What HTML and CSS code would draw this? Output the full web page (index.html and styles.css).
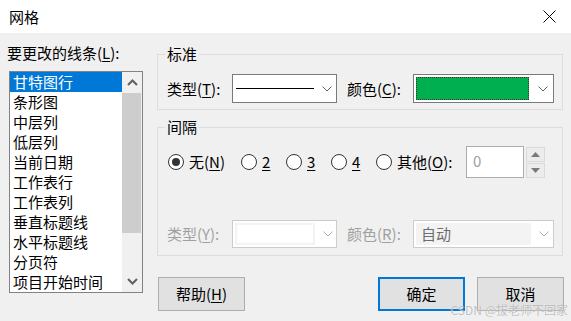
FILE: index.html
```html
<!DOCTYPE html>
<html lang="zh-CN">
<head>
<meta charset="utf-8">
<title>网格</title>
<link rel="stylesheet" href="styles.css">
</head>
<body>
<div class="titlebar">
  <span class="title">网格</span>
  <svg class="close" width="13" height="13" viewBox="0 0 13 13"><path d="M0.5 0.5 L12.5 12.5 M12.5 0.5 L0.5 12.5" stroke="#000" stroke-width="1" fill="none"/></svg>
</div>
<div class="main">
  <div class="left">
    <div class="left-label">要更改的线条(<u>L</u>):</div>
    <div class="listbox">
      <ul class="items">
        <li class="item sel">甘特图行</li>
        <li class="item">条形图</li>
        <li class="item">中层列</li>
        <li class="item">低层列</li>
        <li class="item">当前日期</li>
        <li class="item">工作表行</li>
        <li class="item">工作表列</li>
        <li class="item">垂直标题线</li>
        <li class="item">水平标题线</li>
        <li class="item">分页符</li>
        <li class="item">项目开始时间</li>
      </ul>
      <div class="scrollbar">
        <div class="sb-arrow"><svg width="11" height="7" viewBox="0 0 11 7"><path d="M1 6 L5.5 1.5 L10 6" stroke="#606060" stroke-width="2" fill="none"/></svg></div>
        <div class="sb-track"><div class="sb-thumb"></div></div>
        <div class="sb-arrow"><svg width="11" height="7" viewBox="0 0 11 7"><path d="M1 1 L5.5 5.5 L10 1" stroke="#606060" stroke-width="2" fill="none"/></svg></div>
      </div>
    </div>
  </div>
  <div class="right">
    <fieldset class="group g1">
      <legend>标准</legend>
      <div class="row row1">
        <span class="lbl lbl-a">类型(<u>T</u>):</span>
        <div class="combo combo-a">
          <div class="combo-body"><span class="line"></span></div>
          <span class="chev"><svg width="10" height="6" viewBox="0 0 10 6"><path d="M0.5 0.5 L5 5 L9.5 0.5" stroke="#606060" fill="none"/></svg></span>
        </div>
        <span class="lbl lbl-b">颜色(<u>C</u>):</span>
        <div class="combo combo-b">
          <div class="combo-body"><span class="swatch"></span></div>
          <span class="chev"><svg width="10" height="6" viewBox="0 0 10 6"><path d="M0.5 0.5 L5 5 L9.5 0.5" stroke="#606060" fill="none"/></svg></span>
        </div>
      </div>
    </fieldset>
    <fieldset class="group g2">
      <legend>间隔</legend>
      <div class="row row2">
        <label class="radio-item r-none"><span class="radio checked"></span><span class="rtext">无(<u>N</u>)</span></label>
        <label class="radio-item r-2"><span class="radio"></span><span class="rtext"><u>2</u></span></label>
        <label class="radio-item r-3"><span class="radio"></span><span class="rtext"><u>3</u></span></label>
        <label class="radio-item r-4"><span class="radio"></span><span class="rtext"><u>4</u></span></label>
        <label class="radio-item r-other"><span class="radio"></span><span class="rtext">其他(<u>O</u>):</span></label>
        <div class="spin-input">0</div>
        <div class="spinner">
          <span class="spin-btn"><svg width="9" height="5" viewBox="0 0 9 5"><path d="M0 5 L4.5 0 L9 5 Z" fill="#7a7a7a"/></svg></span>
          <span class="spin-btn"><svg width="9" height="5" viewBox="0 0 9 5"><path d="M0 0 L4.5 5 L9 0 Z" fill="#7a7a7a"/></svg></span>
        </div>
      </div>
      <div class="row row3">
        <span class="lbl lbl-a disabled">类型(<u>Y</u>):</span>
        <div class="combo combo-a dis">
          <div class="combo-body"><span class="dis-inner"></span></div>
          <span class="chev"><svg width="10" height="6" viewBox="0 0 10 6"><path d="M0.5 0.5 L5 5 L9.5 0.5" stroke="#b5b5b5" fill="none"/></svg></span>
        </div>
        <span class="lbl lbl-b disabled">颜色(<u>R</u>):</span>
        <div class="combo combo-b dis">
          <div class="combo-body"><span class="auto">自动</span></div>
          <span class="chev"><svg width="10" height="6" viewBox="0 0 10 6"><path d="M0.5 0.5 L5 5 L9.5 0.5" stroke="#b5b5b5" fill="none"/></svg></span>
        </div>
      </div>
    </fieldset>
    <div class="buttons">
      <button class="btn help">帮助(<u>H</u>)</button>
      <span class="spacer"></span>
      <button class="btn ok">确定</button>
      <button class="btn cancel">取消</button>
    </div>
  </div>
</div>
<div class="watermark">CSDN @拔老师不回家</div>
</body>
</html>
```
FILE: styles.css
```css
* { box-sizing: border-box; }
html, body { margin: 0; padding: 0; }
body {
  width: 571px;
  height: 321px;
  overflow: hidden;
  position: relative;
  background: #f0f0f0;
  font-family: "Noto Sans CJK SC", "Microsoft YaHei", sans-serif;
  font-size: 15px;
  color: #000;
}
u { text-decoration: underline; text-underline-offset: 2px; text-decoration-thickness: 1px; }

.titlebar {
  height: 33px;
  background: #fff;
  display: flex;
  align-items: center;
  justify-content: space-between;
  padding: 0 15px 0 9px;
}
.title { line-height: 20px; }
.close { display: block; }

.main {
  display: flex;
  padding: 10px 0 0 7px;
  gap: 14px;
}
.left { width: 136px; }
.left-label { line-height: 20px; height: 20px; white-space: nowrap; }
.listbox {
  margin: 8px 0 0 2px;
  width: 134px;
  height: 222px;
  border: 1px solid #828282;
  background: #fff;
  display: flex;
}
.items { flex: 1; list-style: none; margin: 0; padding: 0; min-width: 0; }
.item { height: 20px; line-height: 20px; padding-left: 3px; white-space: nowrap; overflow: hidden; }
.item.sel { background: #0078d7; color: #fff; }
.scrollbar {
  width: 20px;
  background: #f0f0f0;
  display: flex;
  flex-direction: column;
}
.sb-arrow { height: 21px; display: flex; align-items: center; justify-content: center; }
.sb-arrow svg { display: block; }
.sb-track { flex: 1; }
.sb-thumb { height: 140px; background: #cdcdcd; margin-right: 1px; }

.right { width: 406px; display: flex; flex-direction: column; }
.group {
  margin: 0;
  padding: 0 8px 0 9px;
  border: 1px solid #dcdcdc;
  min-width: 0;
}
.group legend { padding: 0 2px; margin-left: -2px; line-height: 20px; height: 20px; }
.g1 { margin-top: 1px; padding-bottom: 6px; }
.g2 { margin-top: 7px; padding-bottom: 7px; }

.row { display: flex; align-items: center; }
.row1 { margin-top: 10px; height: 29px; }
.row2 { margin-top: 9px; height: 32px; }
.row3 { margin-top: 42px; height: 28px; }

.lbl { line-height: 20px; white-space: nowrap; }
.lbl-a { width: 65px; }
.lbl-b { width: 66px; margin-left: 10px; }
.disabled { color: #a0a0a0; }

.combo {
  height: 100%;
  border: 1px solid #7a7a7a;
  background: #fff;
  display: flex;
  align-items: stretch;
}
.combo-a { width: 105px; }
.combo-b { width: 141px; }
.combo-body { flex: 1; display: flex; align-items: center; padding: 2px; }
.chev { width: 22px; display: flex; align-items: center; justify-content: center; padding-left: 2px; }
.chev svg { display: block; }
.line { display: block; width: 78px; height: 1px; background: #000; margin-left: 1px; }
.swatch {
  display: block;
  width: 113px;
  height: 23px;
  background: #00b050;
  border: 1px dotted #5a2a2a;
}
.combo.dis { border-color: #cccccc; }
.dis-inner { display: block; width: 80px; height: 100%; border: 2px solid #f3f3f3; background: #fff; }
.auto { display: block; width: 115px; height: 100%; background: #f3f3f3; color: #6d6d6d; line-height: 22px; padding-left: 5px; }

.radio-item { display: flex; align-items: center; gap: 5px; line-height: 20px; white-space: nowrap; }
.rtext { display: block; }
.r-none { margin-left: 1px; width: 73px; }
.r-2, .r-3, .r-4 { width: 45px; }
.r-2 { margin-left: 0; }
.radio {
  flex: none;
  width: 16px;
  height: 16px;
  border: 1px solid #333;
  border-radius: 50%;
  background: #fff;
  display: flex;
  align-items: center;
  justify-content: center;
}
.radio.checked::after {
  content: "";
  width: 8px;
  height: 8px;
  border-radius: 50%;
  background: #333;
}
.spin-input {
  margin-left: auto;
  width: 58px;
  height: 32px;
  border: 1px solid #adadad;
  background: #fff;
  color: #a0a0a0;
  line-height: 28px;
  padding-left: 6px;
}
.spinner {
  margin-left: 2px;
  margin-right: 9px;
  width: 19px;
  height: 31px;
  display: flex;
  flex-direction: column;
  gap: 1px;
}
.spin-btn {
  flex: 1;
  border: 1px solid #dadada;
  background: #ececec;
  display: flex;
  align-items: center;
  justify-content: center;
}
.spin-btn svg { display: block; }

.buttons { display: flex; margin-top: 21px; padding-left: 1px; }
.spacer { flex: 1; }
.btn {
  width: 87px;
  height: 34px;
  font: inherit;
  color: #000;
  background: #e1e1e1;
  border: 1px solid #adadad;
  padding: 0;
  line-height: 20px;
}
.btn.ok { border: 2px solid #0078d7; }
.btn.cancel { margin-left: 12px; margin-right: -1px; }

.watermark {
  position: absolute;
  right: 3px;
  bottom: 4px;
  font-size: 12px;
  line-height: 14px;
  color: rgba(140, 140, 140, 0.55);
  text-shadow: 0 0 1px rgba(255,255,255,0.9);
  white-space: nowrap;
}
```
